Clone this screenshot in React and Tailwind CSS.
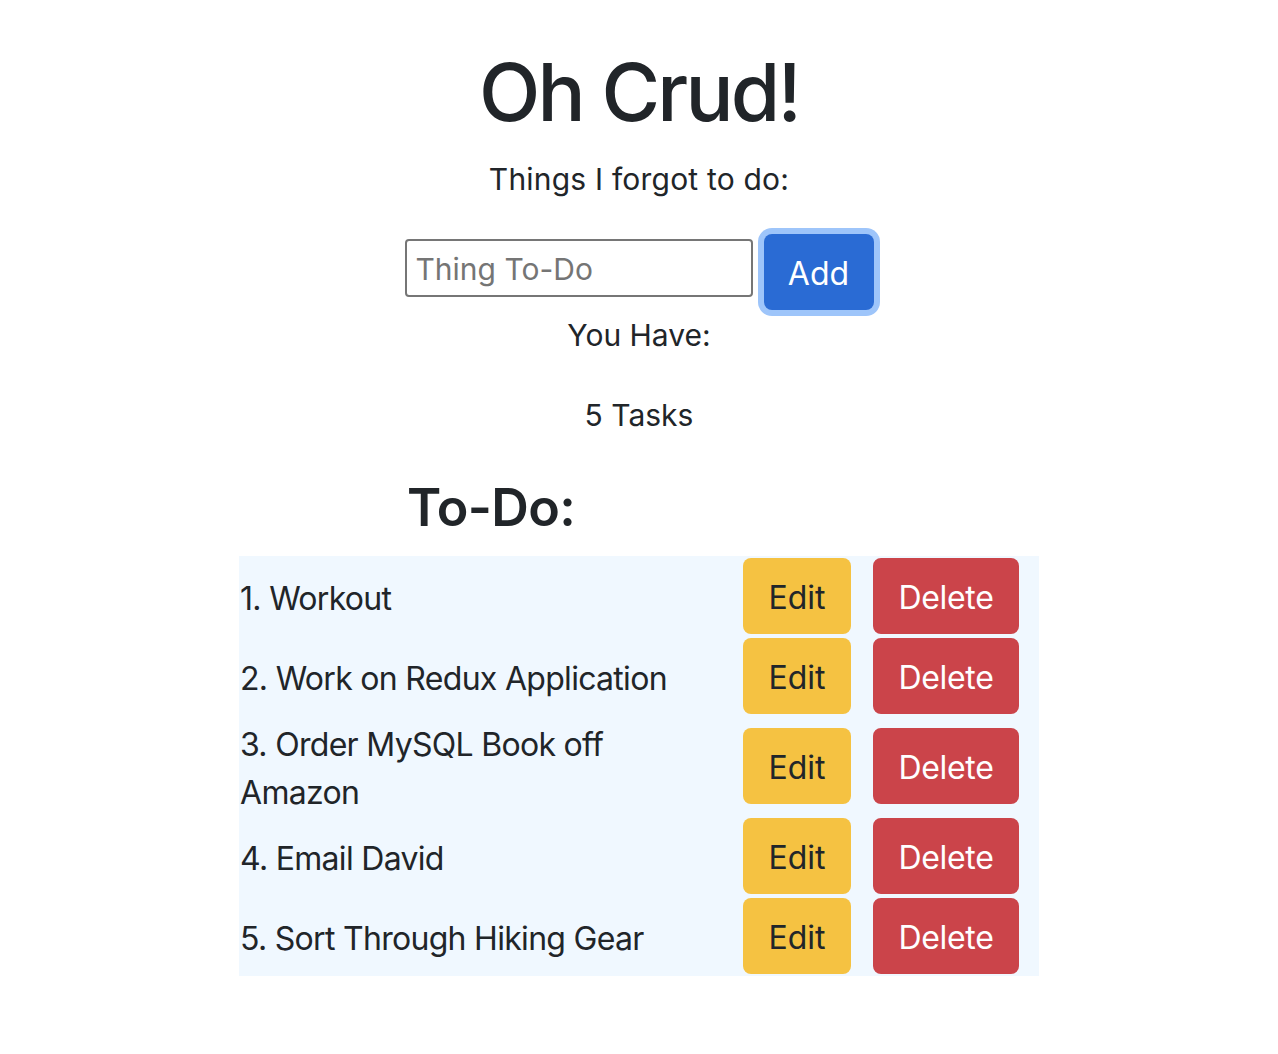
import React from 'react';

const tasks = [
  'Workout',
  'Work on Redux Application',
  'Order MySQL Book off Amazon',
  'Email David',
  'Sort Through Hiking Gear',
];

const TaskRow = ({ num, text }) => {
  return (
    <div className="flex items-center py-[2px]">
      <div className="w-[460px] pl-[1px] pt-[3px] -mb-[3px] text-[32px] leading-[48px] tracking-[-0.7px]">
        {num}. {text}
      </div>
      <div className="flex-1" />
      <button className="w-[108px] h-[76px] pt-[3px] rounded-[8px] bg-[#f5c242] text-[32px] text-[#212529]">
        Edit
      </button>
      <button className="ml-[22px] mr-[20px] w-[146px] h-[76px] pt-[3px] rounded-[8px] bg-[#cb444a] text-[32px] text-white tracking-[-0.3px]">
        Delete
      </button>
    </div>
  );
};

const App = () => {
  return (
    <div className="min-h-screen bg-white text-[#212529] font-['Inter','Noto_Sans',sans-serif]">
      {/* Header */}
      <h1 className="pt-[44px] text-center text-[80px] leading-[96px] font-medium tracking-[-2.8px]">
        Oh Crud!
      </h1>
      <p className="mt-[18px] text-center text-[30px] leading-[42px] tracking-[0.2px]">Things I forgot to do:</p>

      {/* Add form */}
      <div className="mt-[34px] flex justify-center items-start">
        <input
          type="text"
          placeholder="Thing To-Do"
          className="mt-[5px] w-[348px] h-[58px] border-2 border-[#767676] rounded-[4px] pl-[9px] pt-[2px] text-[30px] placeholder:text-[#757575] outline-none"
        />
        <button className="ml-[11px] w-[110px] h-[76px] pt-[3px] rounded-[8px] bg-[#2a6bd4] text-[32px] text-white ring-[6px] ring-[#9ec5fa]">
          Add
        </button>
      </div>

      <p className="mt-[1px] text-center text-[30px] leading-[48px]">You Have:</p>
      <p className="mt-[32px] text-center text-[30px] leading-[48px]">5 Tasks</p>

      {/* List */}
      <div className="w-[800px] mx-auto">
        <h2 className="mt-[38px] pl-[168px] text-[52px] leading-[62px] font-semibold tracking-[-0.6px]">To-Do:</h2>
        <div className="mt-[17px] bg-[#f0f8ff]">
          {tasks.map((t, i) => (
            <TaskRow key={i} num={i + 1} text={t} />
          ))}
        </div>
      </div>
    </div>
  );
};

export default App;
